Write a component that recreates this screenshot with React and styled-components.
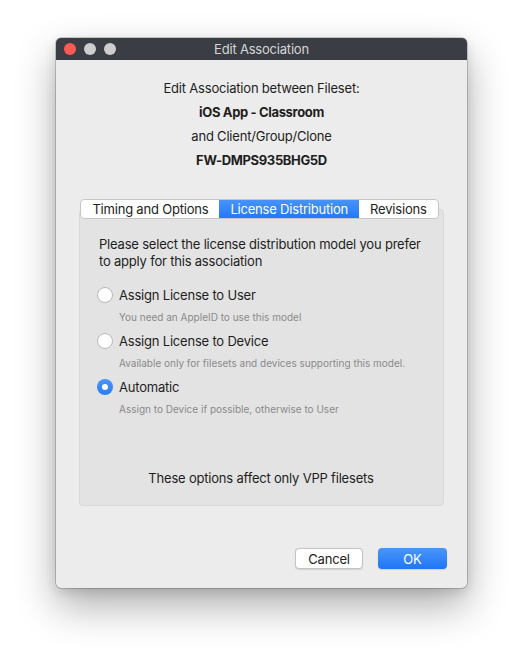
import React from "react";
import styled, { createGlobalStyle } from "styled-components";

const Global = createGlobalStyle`
  html, body { margin: 0; padding: 0; background: #ffffff; }
  body { font-family: Inter, "Noto Sans", sans-serif; -webkit-font-smoothing: antialiased; letter-spacing: -0.2px; }
`;

const Page = styled.div`
  width: 523px;
  height: 662px;
  padding: 38px 0 0 56px;
  box-sizing: border-box;
`;

const Window = styled.div`
  width: 411px;
  height: 550px;
  background: #ececec;
  border-radius: 5px;
  overflow: hidden;
  display: flex;
  flex-direction: column;
  box-shadow: 0 0 0 0.5px rgba(0, 0, 0, 0.35), 0 18px 40px rgba(0, 0, 0, 0.32), 0 4px 12px rgba(0, 0, 0, 0.12);
`;

const TitleBar = styled.div`
  height: 22px;
  flex: none;
  background: #3a3d44;
  display: flex;
  align-items: center;
  position: relative;
  padding-left: 8px;
  gap: 8px;
`;

const Light = styled.span`
  width: 12px;
  height: 12px;
  border-radius: 50%;
  background: ${(p) => p.$color};
`;

const Title = styled.div`
  position: absolute;
  left: 0;
  right: 0;
  text-align: center;
  font-size: 13px;
  color: #d6d6d6;
  line-height: 22px;
`;

const Body = styled.div`
  flex: 1;
  display: flex;
  flex-direction: column;
  padding: 16px 23px 19px 23px;
`;

const Header = styled.div`
  text-align: center;
  font-size: 13px;
  line-height: 24px;
  color: #1e1e1e;
`;

const HeaderLine = styled.div`
  font-weight: ${(p) => (p.$bold ? 700 : 400)};
  letter-spacing: ${(p) => (p.$bold ? "-0.35px" : "inherit")};
`;

const TabArea = styled.div`
  margin-top: 27px;
  display: flex;
  flex-direction: column;
`;

const TabBar = styled.div`
  align-self: center;
  display: flex;
  position: relative;
  z-index: 1;
  background: #fff;
  border: 1px solid #c6c6c6;
  border-radius: 4px;
  overflow: hidden;
  height: 20px;
  box-sizing: border-box;
  margin-left: -4px;
`;

const Tab = styled.div`
  font-size: 13px;
  line-height: 18px;
  padding: 0 ${(p) => p.$pad}px;
  color: ${(p) => (p.$active ? "#ffffff" : "#222")};
  background: ${(p) => (p.$active ? "linear-gradient(#4793f9, #2379f6)" : "transparent")};
  white-space: nowrap;
`;

const Panel = styled.div`
  margin-top: -10px;
  height: 297px;
  box-sizing: border-box;
  background: #e3e3e3;
  border: 1px solid #d9d9d9;
  border-radius: 4px;
  padding: 26px 20px 18px 19px;
  display: flex;
  flex-direction: column;
`;

const Intro = styled.div`
  font-size: 13px;
  line-height: 17px;
  color: #1e1e1e;
  white-space: nowrap;
`;

const Options = styled.div`
  margin-top: 15px;
  display: flex;
  flex-direction: column;
  gap: 7px;
`;

const Option = styled.div`
  display: flex;
  flex-direction: column;
`;

const OptionRow = styled.label`
  display: flex;
  align-items: center;
  gap: 6px;
  height: 20px;
  font-size: 13px;
  color: #1e1e1e;
  margin-left: -2px;
`;

const Radio = styled.span`
  width: 16px;
  height: 16px;
  box-sizing: border-box;
  border-radius: 50%;
  flex: none;
  display: flex;
  align-items: center;
  justify-content: center;
  background: ${(p) => (p.$checked ? "linear-gradient(#4a95f9, #2a7df6)" : "#fff")};
  border: ${(p) => (p.$checked ? "none" : "1px solid #b9b9b9")};
  &::after {
    content: "";
    display: ${(p) => (p.$checked ? "block" : "none")};
    width: 6px;
    height: 6px;
    border-radius: 50%;
    background: #fff;
  }
`;

const Sub = styled.div`
  margin-top: 5px;
  margin-left: 20px;
  font-size: 10px;
  line-height: 14px;
  color: #8a8a8a;
  letter-spacing: 0;
`;

const Footnote = styled.div`
  margin-top: auto;
  text-align: center;
  font-size: 13px;
  line-height: 17px;
  color: #1e1e1e;
`;

const Buttons = styled.div`
  margin-top: auto;
  display: flex;
  justify-content: flex-end;
  gap: 15px;
  margin-right: -3px;
`;

const Button = styled.button`
  width: ${(p) => p.$w}px;
  height: 21px;
  box-sizing: border-box;
  font-family: inherit;
  font-size: 13px;
  letter-spacing: inherit;
  border-radius: 4px;
  padding: 0;
  color: ${(p) => (p.$primary ? "#fff" : "#222")};
  background: ${(p) => (p.$primary ? "linear-gradient(#4a95f9, #1f76f5)" : "#fff")};
  border: ${(p) => (p.$primary ? "none" : "1px solid #c4c4c4")};
  box-shadow: 0 0.5px 1px rgba(0, 0, 0, 0.12);
`;

const options = [
  { label: "Assign License to User", sub: "You need an AppleID to use this model" },
  { label: "Assign License to Device", sub: "Available only for filesets and devices supporting this model." },
  { label: "Automatic", sub: "Assign to Device if possible, otherwise to User", checked: true },
];

export default function App() {
  return (
    <Page>
      <Global />
      <Window>
        <TitleBar>
          <Light $color="#fd5a55" />
          <Light $color="#cdcdcd" />
          <Light $color="#cdcdcd" />
          <Title>Edit Association</Title>
        </TitleBar>
        <Body>
          <Header>
            <HeaderLine>Edit Association between Fileset:</HeaderLine>
            <HeaderLine $bold>iOS App - Classroom</HeaderLine>
            <HeaderLine>and Client/Group/Clone</HeaderLine>
            <HeaderLine $bold>FW-DMPS935BHG5D</HeaderLine>
          </Header>
          <TabArea>
            <TabBar>
              <Tab $pad={11}>Timing and Options</Tab>
              <Tab $pad={11} $active>License Distribution</Tab>
              <Tab $pad={11}>Revisions</Tab>
            </TabBar>
            <Panel>
              <Intro>
                Please select the license distribution model you prefer
                <br />
                to apply for this association
              </Intro>
              <Options>
                {options.map((o) => (
                  <Option key={o.label}>
                    <OptionRow>
                      <Radio $checked={o.checked} />
                      {o.label}
                    </OptionRow>
                    <Sub>{o.sub}</Sub>
                  </Option>
                ))}
              </Options>
              <Footnote>These options affect only VPP filesets</Footnote>
            </Panel>
          </TabArea>
          <Buttons>
            <Button $w={68}>Cancel</Button>
            <Button $w={69} $primary>OK</Button>
          </Buttons>
        </Body>
      </Window>
    </Page>
  );
}
